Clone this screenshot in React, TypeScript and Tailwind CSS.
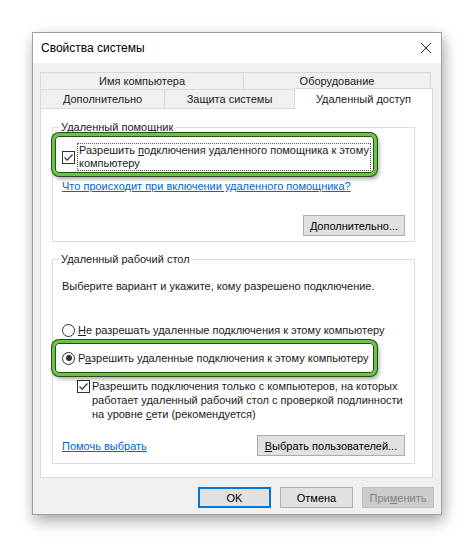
import React from "react";

const font = "font-['Segoe_UI','Liberation_Sans',Arial,sans-serif]";

function CheckBox() {
  return (
    <span className="w-[13px] h-[13px] border border-[#333333] bg-white shrink-0 flex items-center justify-center">
      <svg width="11" height="11" viewBox="0 0 11 11">
        <path d="M1.5 5.5 L4.2 8.2 L9.5 2.5" fill="none" stroke="#333333" strokeWidth="1.2" />
      </svg>
    </span>
  );
}

function Radio({ checked }: { checked?: boolean }) {
  return (
    <span className="w-[13px] h-[13px] rounded-full border border-[#333333] bg-white shrink-0 flex items-center justify-center">
      {checked && <span className="w-[6px] h-[6px] rounded-full bg-[#333333]" />}
    </span>
  );
}

function Btn({ children, className = "" }: { children: React.ReactNode; className?: string }) {
  return (
    <div className={`h-[21px] border flex items-center justify-center text-[11px] ${className}`}>
      {children}
    </div>
  );
}

// green annotation frame, drawn over the row it marks
function Highlight({ className }: { className: string }) {
  return (
    <div
      className={`absolute rounded-[7px] border-[3px] border-[#63c83f] bg-white shadow-[0_0_0_1px_#2c4a22,inset_0_0_0_1px_#2c4a22,2px_3px_4px_rgba(0,0,0,0.35)] ${className}`}
    />
  );
}

export default function App() {
  return (
    <div className={`min-h-[547px] bg-white pt-[32px] pl-[32px] ${font} text-[11px] leading-[14px] text-[#1a1a1a]`}>
      <div className="w-[410px] h-[483px] border border-[#a0a0a0] bg-[#f0f0f0] flex flex-col shadow-[2px_6px_14px_rgba(0,0,0,0.35)]">
        {/* title bar */}
        <div className="h-[30px] bg-white flex items-center justify-between pl-[8px] pr-[9px] shrink-0">
          <span className="text-[12px] text-black">Свойства системы</span>
          <svg width="12" height="12" viewBox="0 0 12 12">
            <path d="M1 1 L11 11 M11 1 L1 11" stroke="#222" strokeWidth="1" />
          </svg>
        </div>

        <div className="flex-1 px-[7px] pt-[9px]">
          {/* tabs */}
          <div className="flex">
            <div className="w-[204px] h-[18px] border border-[#d9d9d9] flex items-center justify-center">Имя компьютера</div>
            <div className="w-[188px] h-[18px] border border-[#d9d9d9] -ml-px flex items-center justify-center">Оборудование</div>
          </div>
          <div className="flex items-start -mt-px h-[20px]">
            <div className="w-[125px] h-[20px] border border-[#d9d9d9] flex items-center justify-center">Дополнительно</div>
            <div className="w-[131px] h-[20px] border border-[#d9d9d9] -ml-px flex items-center justify-center">Защита системы</div>
            <div className="w-[139px] h-[22px] -mt-px -ml-px border border-b-0 border-[#d9d9d9] bg-white relative z-10 flex items-start justify-center pt-[3px]">
              Удаленный доступ
            </div>
          </div>

          {/* tab page */}
          <div className="w-[393px] h-[370px] -mt-px bg-white border border-[#d9d9d9] pl-[11px] pr-[17px] pt-[11px]">
            <fieldset className="border border-[#dcdcdc] pl-[9px] pr-[9px] pb-[5px]">
              <legend className="-ml-[3px] px-[2px] leading-[14px]">Удаленный помощник</legend>

              <div className="relative mt-[9px]">
                <Highlight className="-left-[10px] w-[325px] -top-[10px] h-[43px]" />
                <div className="relative flex items-center gap-[2px]">
                  <CheckBox />
                  <div className="border border-dotted border-[#555] px-[1px] leading-[13px] w-[294px]">
                    Разрешить <u>п</u>одключения удаленного помощника к этому компьютеру
                  </div>
                </div>
              </div>

              <div className="mt-[8px] text-[#0066cc] underline">Что происходит при включении удаленного помощника?</div>

              <div className="flex justify-end mt-[22px]">
                <Btn className="w-[102px] bg-[#e1e1e1] border-[#adadad] text-black"><u>Д</u>ополнительно...</Btn>
              </div>
            </fieldset>

            <fieldset className="mt-[10px] border border-[#dcdcdc] pl-[9px] pr-[9px] pb-[7px]">
              <legend className="-ml-[3px] px-[2px] leading-[14px]">Удаленный рабочий стол</legend>

              <div className="mt-[13px]">Выберите вариант и укажите, кому разрешено подключение.</div>

              <div className="mt-[30px] flex items-center gap-[3px]">
                <Radio />
                <span><u>Н</u>е разрешать удаленные подключения к этому компьютеру</span>
              </div>

              <div className="relative mt-[14px]">
                <Highlight className="-left-[10px] w-[325px] -top-[11px] h-[36px]" />
                <div className="relative flex items-center gap-[3px]">
                  <Radio checked />
                  <span>Р<u>а</u>зрешить удаленные подключения к этому компьютеру</span>
                </div>
              </div>

              <div className="mt-[14px] pl-[15px] flex items-start gap-[2px]">
                <div className="pt-[1px]"><CheckBox /></div>
                <div className="w-[312px]">
                  Разрешить подключения только с компьютеров, на которых работает удаленный рабочий стол с проверкой подлинности на уровне <u>с</u>ети (рекомендуется)
                </div>
              </div>

              <div className="mt-[14px] flex items-center justify-between">
                <span className="text-[#0066cc] underline">Помочь выбрать</span>
                <Btn className="w-[148px] bg-[#e1e1e1] border-[#adadad] text-black"><u>В</u>ыбрать пользователей...</Btn>
              </div>
            </fieldset>
          </div>

          {/* dialog buttons */}
          <div className="mt-[9px] flex justify-end gap-[9px]">
            <Btn className="w-[73px] bg-[#e1e1e1] border-2 border-[#0078d7] text-black">OK</Btn>
            <Btn className="w-[73px] bg-[#e1e1e1] border-[#adadad] text-black">Отмена</Btn>
            <Btn className="w-[72px] bg-[#cccccc] border-[#bfbfbf] text-[#838383]">При<u>м</u>енить</Btn>
          </div>
        </div>
      </div>
    </div>
  );
}
